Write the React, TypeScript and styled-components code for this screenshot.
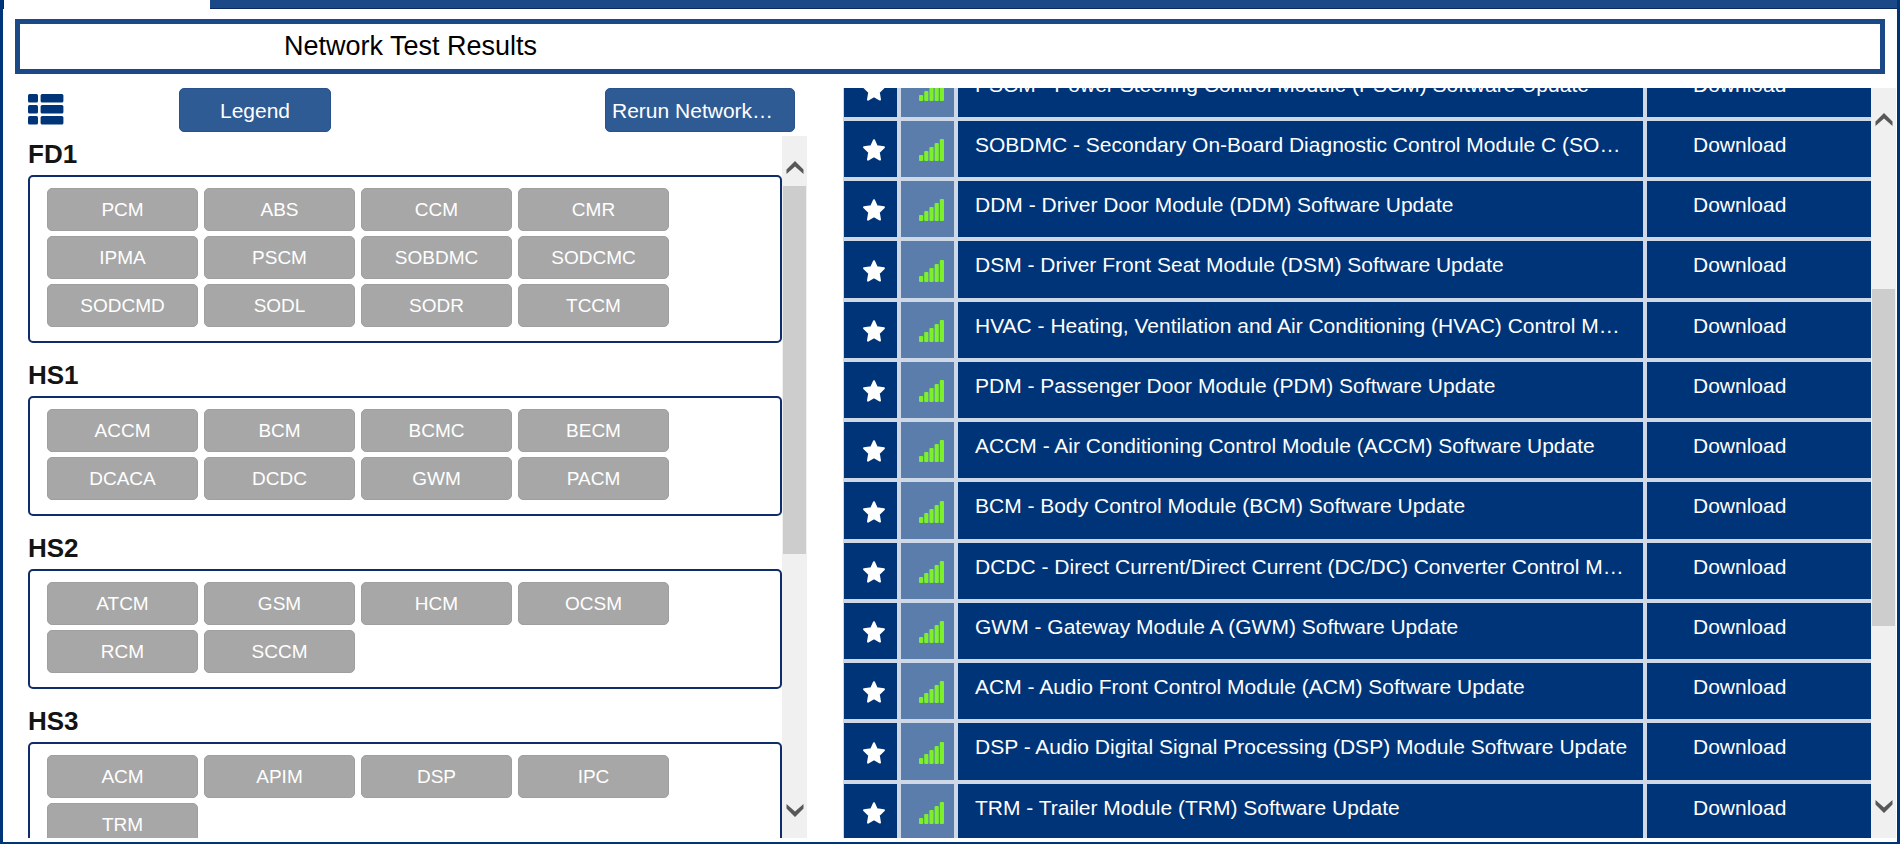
import React, { useLayoutEffect, useRef } from "react";
import styled, { createGlobalStyle, css } from "styled-components";

const navy = "#003478";
const grid = "#cfd8e6";

const GlobalStyle = createGlobalStyle`
  *, *::before, *::after { box-sizing: border-box; }
  body {
    margin: 0;
    background: #fff;
    color: #141414;
    font-family: "Liberation Sans", Arial, Helvetica, sans-serif;
  }
  button { font-family: inherit; cursor: pointer; }
`;

const Frame = styled.div`
  display: flex;
  flex-direction: column;
  height: 100vh;
  border: solid ${navy};
  border-width: 0 3px 2px;
  padding-bottom: 4px;
`;

const TabStrip = styled.div`
  flex: none;
  height: 9px;
  background: #1b4886;
  border-bottom: 1px solid #0a2a5e;
`;

const ActiveTab = styled.div`
  width: 207px;
  height: 9px;
  background: #fff;
  border-left: 1px solid #0a2a5e;
`;

const TitleBar = styled.header`
  flex: none;
  margin: 10px 12px 14px;
  padding-left: 264px;
  border: 5px solid #1b4886;
`;

const Title = styled.h1`
  margin: 0;
  font-size: 27px;
  line-height: 45px;
  font-weight: 400;
  color: #000;
`;

const Columns = styled.main`
  flex: 1;
  min-height: 0;
  display: grid;
  grid-template-columns: minmax(0, 779fr) minmax(0, 1053fr);
  grid-template-rows: minmax(0, 1fr);
  gap: 36px;
  padding: 0 1px 0 25px;
`;

const NetworkPanel = styled.section`
  display: flex;
  flex-direction: column;
  min-height: 0;
`;

const Toolbar = styled.div`
  flex: none;
  display: flex;
  align-items: flex-start;
  height: 48px;
  padding-right: 12px;
`;

const ListToggle = styled.button`
  display: flex;
  margin: 6px 115px 0 0;
  padding: 0;
  border: 0;
  background: none;
`;

const ToolbarButton = styled.button<{ $wide?: boolean }>`
  height: 44px;
  width: ${(p) => (p.$wide ? 190 : 152)}px;
  padding: 2px 6px 0;
  border: 1px solid #28528b;
  border-radius: 5px;
  background: #2f5b95;
  color: #fff;
  font-size: 21px;
  line-height: 28px;
  white-space: nowrap;
  ${(p) =>
    p.$wide &&
    css`
      margin-left: auto;
      text-align: left;
    `}
`;

const ScrollFrame = styled.div`
  flex: 1;
  display: flex;
  min-height: 0;
`;

const ScrollArea = styled.div`
  flex: 1;
  min-width: 0;
  overflow-y: auto;
  scrollbar-width: none;
`;

const Track = styled.div`
  flex: none;
  display: flex;
  flex-direction: column;
  width: 25px;
  padding: 0 1px;
  background: #f0f0f0;
`;

const ArrowButton = styled.button<{ $down?: boolean; $inset: number }>`
  display: flex;
  flex: none;
  justify-content: center;
  height: 50px;
  padding: ${(p) => (p.$down ? `0 0 ${p.$inset}px` : `${p.$inset}px 0 0`)};
  align-items: ${(p) => (p.$down ? "flex-end" : "flex-start")};
  border: 0;
  background: none;
`;

const ThumbLane = styled.div`
  flex: 1;
  display: flex;
  flex-direction: column;
`;

const Thumb = styled.div<{ $size: number }>`
  flex: ${(p) => p.$size};
  background: #cdcdcd;
`;

const Spacer = styled.div<{ $size: number }>`
  flex: ${(p) => p.$size};
`;

const GroupHeading = styled.h2`
  margin: 0 0 2px;
  font-size: 26px;
  line-height: 37px;
  font-weight: 700;
`;

const GroupBox = styled.div`
  display: flex;
  flex-wrap: wrap;
  gap: 5px 6px;
  margin-bottom: 14px;
  padding: 11px 17px 14px;
  border: solid #0f2d6b;
  border-width: 2px;
  border-radius: 5px;
`;

const ModuleButton = styled.button`
  width: 151px;
  height: 43px;
  padding: 0;
  border: 1px solid #9f9f9f;
  border-radius: 5px;
  background: #a7a7a7;
  color: #fff;
  font-size: 19px;
  line-height: 28px;
`;

const UpdateTable = styled.table`
  width: 100%;
  table-layout: fixed;
  border-spacing: 0;
  border-left: 1px solid ${grid};
`;

const Col = styled.col<{ $width?: number }>`
  width: ${(p) => (p.$width ? `${p.$width}px` : "auto")};
`;

const Row = styled.tr`
  height: 60px;
  &:nth-child(4n) { height: 61px; }
`;

const Cell = styled.td<{ $tone?: "signal" }>`
  padding: 0;
  border-bottom: 4px solid ${grid};
  background: ${(p) => (p.$tone === "signal" ? "#5a7dab" : navy)};
  & + & { border-left: 4px solid ${grid}; }
`;

const TextCell = styled(Cell)`
  padding: 10px 8px 0 17px;
  vertical-align: top;
  color: #fff;
  font-size: 21px;
  line-height: 28px;
  white-space: nowrap;
  overflow: hidden;
  text-overflow: ellipsis;
`;

const ActionCell = styled(Cell)`
  padding: 10px 0 0 46px;
  vertical-align: top;
`;

const CellIcon = styled.div`
  display: flex;
  justify-content: center;
  padding: 2px 0 0 7px;
`;

const StarButton = styled.button`
  display: flex;
  padding: 0;
  border: 0;
  background: none;
`;

const DownloadButton = styled.button`
  display: block;
  padding: 0;
  border: 0;
  background: none;
  color: #fff;
  font-size: 21px;
  line-height: 28px;
`;

const groups = [
  {
    name: "FD1",
    modules: ["PCM", "ABS", "CCM", "CMR", "IPMA", "PSCM", "SOBDMC", "SODCMC", "SODCMD", "SODL", "SODR", "TCCM"],
  },
  { name: "HS1", modules: ["ACCM", "BCM", "BCMC", "BECM", "DCACA", "DCDC", "GWM", "PACM"] },
  { name: "HS2", modules: ["ATCM", "GSM", "HCM", "OCSM", "RCM", "SCCM"] },
  { name: "HS3", modules: ["ACM", "APIM", "DSP", "IPC", "TRM"] },
];

const updates = [
  "PSCM - Power Steering Control Module (PSCM) Software Update",
  "SOBDMC - Secondary On-Board Diagnostic Control Module C (SO…",
  "DDM - Driver Door Module (DDM) Software Update",
  "DSM - Driver Front Seat Module (DSM) Software Update",
  "HVAC - Heating, Ventilation and Air Conditioning (HVAC) Control M…",
  "PDM - Passenger Door Module (PDM) Software Update",
  "ACCM - Air Conditioning Control Module (ACCM) Software Update",
  "BCM - Body Control Module (BCM) Software Update",
  "DCDC - Direct Current/Direct Current (DC/DC) Converter Control M…",
  "GWM - Gateway Module A (GWM) Software Update",
  "ACM - Audio Front Control Module (ACM) Software Update",
  "DSP - Audio Digital Signal Processing (DSP) Module Software Update",
  "TRM - Trailer Module (TRM) Software Update",
];

const ListIcon = () => (
  <svg width="36" height="31" viewBox="0 0 36 31" fill={navy} aria-hidden="true">
    {[0, 11, 22].map((y) => (
      <g key={y}>
        <rect x="0" y={y} width="10" height="8.6" rx="1.5" />
        <rect x="12.6" y={y} width="22.8" height="8.6" rx="1.5" />
      </g>
    ))}
  </svg>
);

const StarIcon = () => (
  <svg width="22" height="22" viewBox="0 0 22 22" fill="#fff" stroke="#fff" strokeWidth="2" strokeLinejoin="round" aria-hidden="true">
    <path d="M11 1.2 L13.8 7.3 L20.9 8.3 L15.8 13.3 L17 20.6 L11 17.2 L5 20.6 L6.2 13.3 L1.1 8.3 L8.2 7.3 Z" />
  </svg>
);

const SignalIcon = () => (
  <svg width="25" height="22" viewBox="0 0 25 22" fill="#7cf02b" role="img" aria-label="Signal strength: full">
    {[6, 10, 14, 18, 22].map((h, i) => (
      <rect key={h} x={i * 5.2} y={22 - h} width="4.2" height={h} rx="1" />
    ))}
  </svg>
);

const Chevron = ({ down }: { down?: boolean }) => (
  <svg width="18" height="13" viewBox="0 0 18 13" fill="#585858" aria-hidden="true">
    <path d={down ? "M0.5 0 V4.5 L9 13 L17.5 4.5 V0 L9 7.5 Z" : "M0.5 13 V8.5 L9 0 L17.5 8.5 V13 L9 5.5 Z"} />
  </svg>
);

type ScrollbarProps = { before: number; size: number; after: number; bottomInset: number; label: string };

function Scrollbar({ before, size, after, bottomInset, label }: ScrollbarProps) {
  return (
    <Track>
      <ArrowButton $inset={25} aria-label={`Scroll ${label} up`}>
        <Chevron />
      </ArrowButton>
      <ThumbLane>
        <Spacer $size={before} />
        <Thumb $size={size} />
        <Spacer $size={after} />
      </ThumbLane>
      <ArrowButton $down $inset={bottomInset} aria-label={`Scroll ${label} down`}>
        <Chevron down />
      </ArrowButton>
    </Track>
  );
}

export default function App() {
  const updatesRef = useRef<HTMLDivElement>(null);

  // The list opens part-way through its first row.
  useLayoutEffect(() => {
    if (updatesRef.current) updatesRef.current.scrollTop = 27;
  }, []);

  return (
    <>
      <GlobalStyle />
      <Frame>
        <TabStrip>
          <ActiveTab />
        </TabStrip>
        <TitleBar>
          <Title>Network Test Results</Title>
        </TitleBar>
        <Columns>
          <NetworkPanel aria-label="Networks">
            <Toolbar>
              <ListToggle aria-label="List view">
                <ListIcon />
              </ListToggle>
              <ToolbarButton>Legend</ToolbarButton>
              <ToolbarButton $wide>Rerun Network…</ToolbarButton>
            </Toolbar>
            <ScrollFrame>
              <ScrollArea>
                {groups.map((group) => (
                  <section key={group.name}>
                    <GroupHeading>{group.name}</GroupHeading>
                    <GroupBox>
                      {group.modules.map((name) => (
                        <ModuleButton key={name}>{name}</ModuleButton>
                      ))}
                    </GroupBox>
                  </section>
                ))}
              </ScrollArea>
              <Scrollbar before={0} size={368} after={234} bottomInset={21} label="networks" />
            </ScrollFrame>
          </NetworkPanel>
          <ScrollFrame>
            <ScrollArea ref={updatesRef}>
              <UpdateTable aria-label="Software updates">
                <colgroup>
                  <Col $width={53} />
                  <Col $width={57} />
                  <Col />
                  <Col $width={228} />
                </colgroup>
                <tbody>
                  {updates.map((text) => (
                    <Row key={text}>
                      <Cell>
                        <CellIcon>
                          <StarButton aria-label="Favourite">
                            <StarIcon />
                          </StarButton>
                        </CellIcon>
                      </Cell>
                      <Cell $tone="signal">
                        <CellIcon>
                          <SignalIcon />
                        </CellIcon>
                      </Cell>
                      <TextCell>{text}</TextCell>
                      <ActionCell>
                        <DownloadButton>Download</DownloadButton>
                      </ActionCell>
                    </Row>
                  ))}
                </tbody>
              </UpdateTable>
            </ScrollArea>
            <Scrollbar before={151} size={337} after={162} bottomInset={25} label="updates" />
          </ScrollFrame>
        </Columns>
      </Frame>
    </>
  );
}
